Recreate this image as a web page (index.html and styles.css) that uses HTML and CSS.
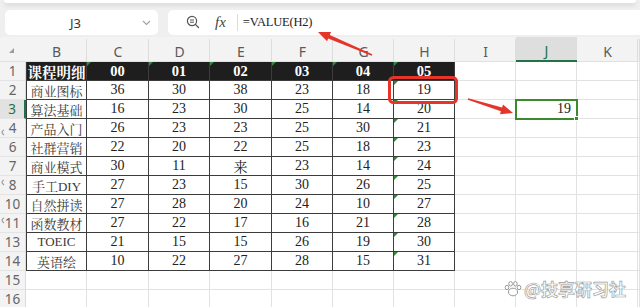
FILE: index.html
```html
<!doctype html>
<html lang="zh-CN">
  <head>
    <meta charset="UTF-8" />
    <meta name="viewport" content="width=device-width, initial-scale=1.0" />
    <title>VALUE 函数</title>
    <link rel="stylesheet" href="styles.css">
  </head>
  <body>
    <div class="topbar"></div>

    <!-- 名称框 + 编辑栏 -->
    <div class="toolbar">
      <div class="namebox">
        <span class="cellref">J3</span>
        <svg class="chevron" width="9" height="6" viewBox="0 0 9 6">
          <path d="M1 1 L4.5 4.5 L8 1" fill="none" stroke="#a0a0a0" stroke-width="1.1" />
        </svg>
      </div>
      <div class="formulabox">
        <svg class="zoomicon" width="14" height="14" viewBox="0 0 14 14">
          <circle cx="6" cy="6" r="4.6" fill="none" stroke="#555" stroke-width="1.2" />
          <path d="M4 5 H8 M4 7.2 H8" stroke="#555" stroke-width="1" />
          <path d="M9.4 9.4 L12.5 12.5" stroke="#555" stroke-width="1.3" stroke-linecap="round" />
        </svg>
        <span class="fx">fx</span>
        <span class="divider"></span>
        <span class="formula">=VALUE(H2)</span>
      </div>
    </div>

    <!-- 表格区域 -->
    <div class="sheet" id="sheet"></div>

    <!-- 标注 -->
    <svg class="marks" width="640" height="307" viewBox="0 0 640 307">
      <rect x="389.5" y="77.5" width="67" height="25" rx="4" fill="none" stroke="#e5352b" stroke-width="3" />
      <polygon fill="#e5352b" points="372.3,54.3 329.8,34.9 331.0,32.1 318,32 327.1,41.3 328.2,38.5 371.7,55.7" />
      <polygon fill="#e5352b" points="467.8,99.8 500.9,111.3 500.0,114.2 513,113 503.0,104.6 502.1,107.5 468.2,98.2" />
      <path d="M4 130 Q0 132 4 135 M4 180 Q0 182 4 185 M4 218 Q0 220 4 223" fill="none" stroke="#9a9a9a" stroke-width="1.2" />
    </svg>

    <div class="watermark">
      <svg width="18" height="18" viewBox="0 0 18 18">
        <g fill="#fff" stroke="#9a9a9a" stroke-width="1">
          <ellipse cx="9" cy="12" rx="4.6" ry="3.8" />
          <ellipse cx="3" cy="7.5" rx="1.8" ry="2.2" />
          <ellipse cx="6.6" cy="3.8" rx="1.8" ry="2.3" />
          <ellipse cx="11.4" cy="3.8" rx="1.8" ry="2.3" />
          <ellipse cx="15" cy="7.5" rx="1.8" ry="2.2" />
        </g>
      </svg>
      <span>@技享研习社</span>
    </div>

    <script>
      const cols = ["B", "C", "D", "E", "F", "G", "H", "I", "J", "K", ""];
      const rows = [1, 2, 3, 4, 6, 7, 8, 10, 11, 13, 14, 15, 16];
      const data = {
        1: ["课程明细", "00", "01", "02", "03", "04", "05"],
        2: ["商业图标", "36", "30", "38", "23", "18", "19"],
        3: ["算法基础", "16", "23", "30", "25", "14", "20"],
        4: ["产品入门", "26", "23", "23", "25", "30", "21"],
        6: ["社群营销", "22", "20", "22", "25", "18", "23"],
        7: ["商业模式", "30", "11", "来", "23", "14", "24"],
        8: ["手工DIY", "27", "23", "15", "30", "26", "25"],
        10: ["自然拼读", "27", "28", "20", "24", "10", "27"],
        11: ["函数教材", "27", "22", "17", "16", "21", "28"],
        13: ["TOEIC", "21", "15", "15", "26", "19", "30"],
        14: ["英语绘", "10", "22", "27", "28", "15", "31"],
      };

      const sheet = document.getElementById("sheet");

      function cell(cls, text) {
        const div = document.createElement("div");
        div.className = cls;
        if (text !== undefined) div.textContent = text;
        sheet.appendChild(div);
        return div;
      }

      // 列标题
      cell("corner").innerHTML = '<span class="corner-mark"></span>';
      cols.forEach((c) => {
        cell(c === "J" ? "ch active" : "ch", c);
      });

      // 行
      rows.forEach((r) => {
        cell(r === 3 ? "rh active" : "rh", r);
        const values = data[r];
        cols.forEach((c, i) => {
          let cls = "cell";
          let text = "";
          if (values && i < 7) {
            text = values[i];
            cls += " tb";
            if (i === 0) cls += " first name";
            if (r === 1) cls += " head";
            if (i > 0 && (r === 1 || i === 6)) cls += " warn";
          }
          if (c === "J" && r === 3) {
            cls += " sel";
            text = "19";
          }
          const div = cell(cls, text);
          if (cls.includes("sel")) {
            div.innerHTML = '19<span class="handle"></span>';
          }
        });
      });
    </script>
  </body>
</html>
```

FILE: styles.css
```css
body {
  margin: 0;
  width: 640px;
  height: 307px;
  overflow: hidden;
  position: relative;
  background-color: #efefef;
  font-family: "Noto Sans", "Noto Sans CJK SC", sans-serif;
}
.topbar {
  height: 3px;
  margin: 0 4px;
  background-color: #fff;
  border-radius: 0 0 6px 6px;
  box-shadow: 0 2px 4px rgba(0, 0, 0, 0.12);
}
.toolbar {
  display: flex;
  gap: 10px;
  padding: 7px 0 2px 5px;
}
.namebox {
  width: 153px;
  height: 25px;
  box-sizing: border-box;
  display: flex;
  align-items: center;
  padding: 0 7px 0 0;
  background-color: #fff;
  border-radius: 5px;
}
.cellref {
  flex: 1;
  text-align: center;
  font-size: 13px;
  color: #333;
  padding-left: 4px;
}
.formulabox {
  flex: 1;
  height: 25px;
  display: flex;
  align-items: center;
  background-color: #fff;
  border-radius: 5px 0 0 5px;
  padding-left: 18px;
}
.zoomicon {
  margin-top: -1px;
}
.fx {
  margin-left: 15px;
  font-family: "Liberation Serif", serif;
  font-style: italic;
  font-size: 15px;
  color: #444;
}
.divider {
  width: 1px;
  height: 17px;
  margin: 0 5px 0 11px;
  background-color: #dcdcdc;
}
.formula {
  font-family: "Liberation Serif", "Noto Sans CJK SC", serif;
  font-size: 12.5px;
  color: #222;
  letter-spacing: -0.2px;
}
.sheet {
  display: grid;
  grid-template-columns: 26px 61px 62px 61px 62px 61px 61px 61px 61px 61px 61px 2px;
  grid-template-rows: 25px repeat(13, 19px);
  background-color: #fff;
}
.corner,
.ch,
.rh {
  background-color: #f3f3f3;
  color: #5a5a5a;
  display: flex;
  align-items: center;
  justify-content: center;
  box-sizing: border-box;
}
.corner {
  position: relative;
  border-bottom: 1px solid #e0e0e0;
}
.corner-mark {
  position: absolute;
  left: 9px;
  bottom: 8px;
  border-left: 5px solid transparent;
  border-bottom: 5px solid #9c9c9c;
}
.ch {
  font-size: 14px;
  padding-top: 4px;
  border-bottom: 1px solid #e0e0e0;
  background-image: linear-gradient(#ddd, #ddd);
  background-size: 1px 22px;
  background-position: right bottom;
  background-repeat: no-repeat;
}
.ch.active {
  background-color: #dedede;
  color: #217346;
  border-bottom: 2px solid #217346;
}
.rh {
  font-size: 13.5px;
  color: #666;
  border-right: 1px solid #dadada;
  border-bottom: 1px solid #e4e4e4;
}
.rh.active {
  background-color: #e2e2e2;
  color: #217346;
  border-right: 2px solid #217346;
}
.cell {
  box-sizing: border-box;
  border-right: 1px solid #e2e2e2;
  border-bottom: 1px solid #e2e2e2;
  display: flex;
  align-items: center;
  justify-content: center;
  font-family: "Liberation Serif", "Noto Serif CJK SC", "Noto Sans CJK SC", serif;
  font-size: 14px;
  color: #222;
  position: relative;
  white-space: nowrap;
  overflow: visible;
}
.cell.tb {
  border-right-color: #3c3c3c;
  border-bottom-color: #3c3c3c;
}
.cell.first {
  border-left: 1px solid #3c3c3c;
}
.cell.name {
  font-size: 13px;
  color: #3a3a3a;
}
.cell.head {
  background-color: #1e1e1e;
  color: #fff;
  font-weight: bold;
  font-size: 14.5px;
}
.warn::before {
  content: "";
  position: absolute;
  left: 0;
  top: 0;
  border-top: 4px solid #2f8a3a;
  border-right: 4px solid transparent;
}
.cell.sel {
  justify-content: flex-end;
  padding-right: 5px;
  outline: 2px solid #3c8a2e;
  outline-offset: -1px;
  z-index: 1;
}
.handle {
  position: absolute;
  right: -3px;
  bottom: -3px;
  width: 5px;
  height: 5px;
  background-color: #3c8a2e;
  border: 1px solid #fff;
  box-sizing: border-box;
}
.marks {
  position: absolute;
  left: 0;
  top: 0;
  pointer-events: none;
  z-index: 2;
}
.watermark {
  position: absolute;
  left: 504px;
  top: 276px;
  display: flex;
  align-items: center;
  gap: 2px;
  z-index: 2;
}
.watermark span {
  font-family: "Noto Sans CJK SC", sans-serif;
  font-size: 17px;
  font-weight: bold;
  color: #fff;
  -webkit-text-stroke: 0.7px #a0a0a0;
}
```
